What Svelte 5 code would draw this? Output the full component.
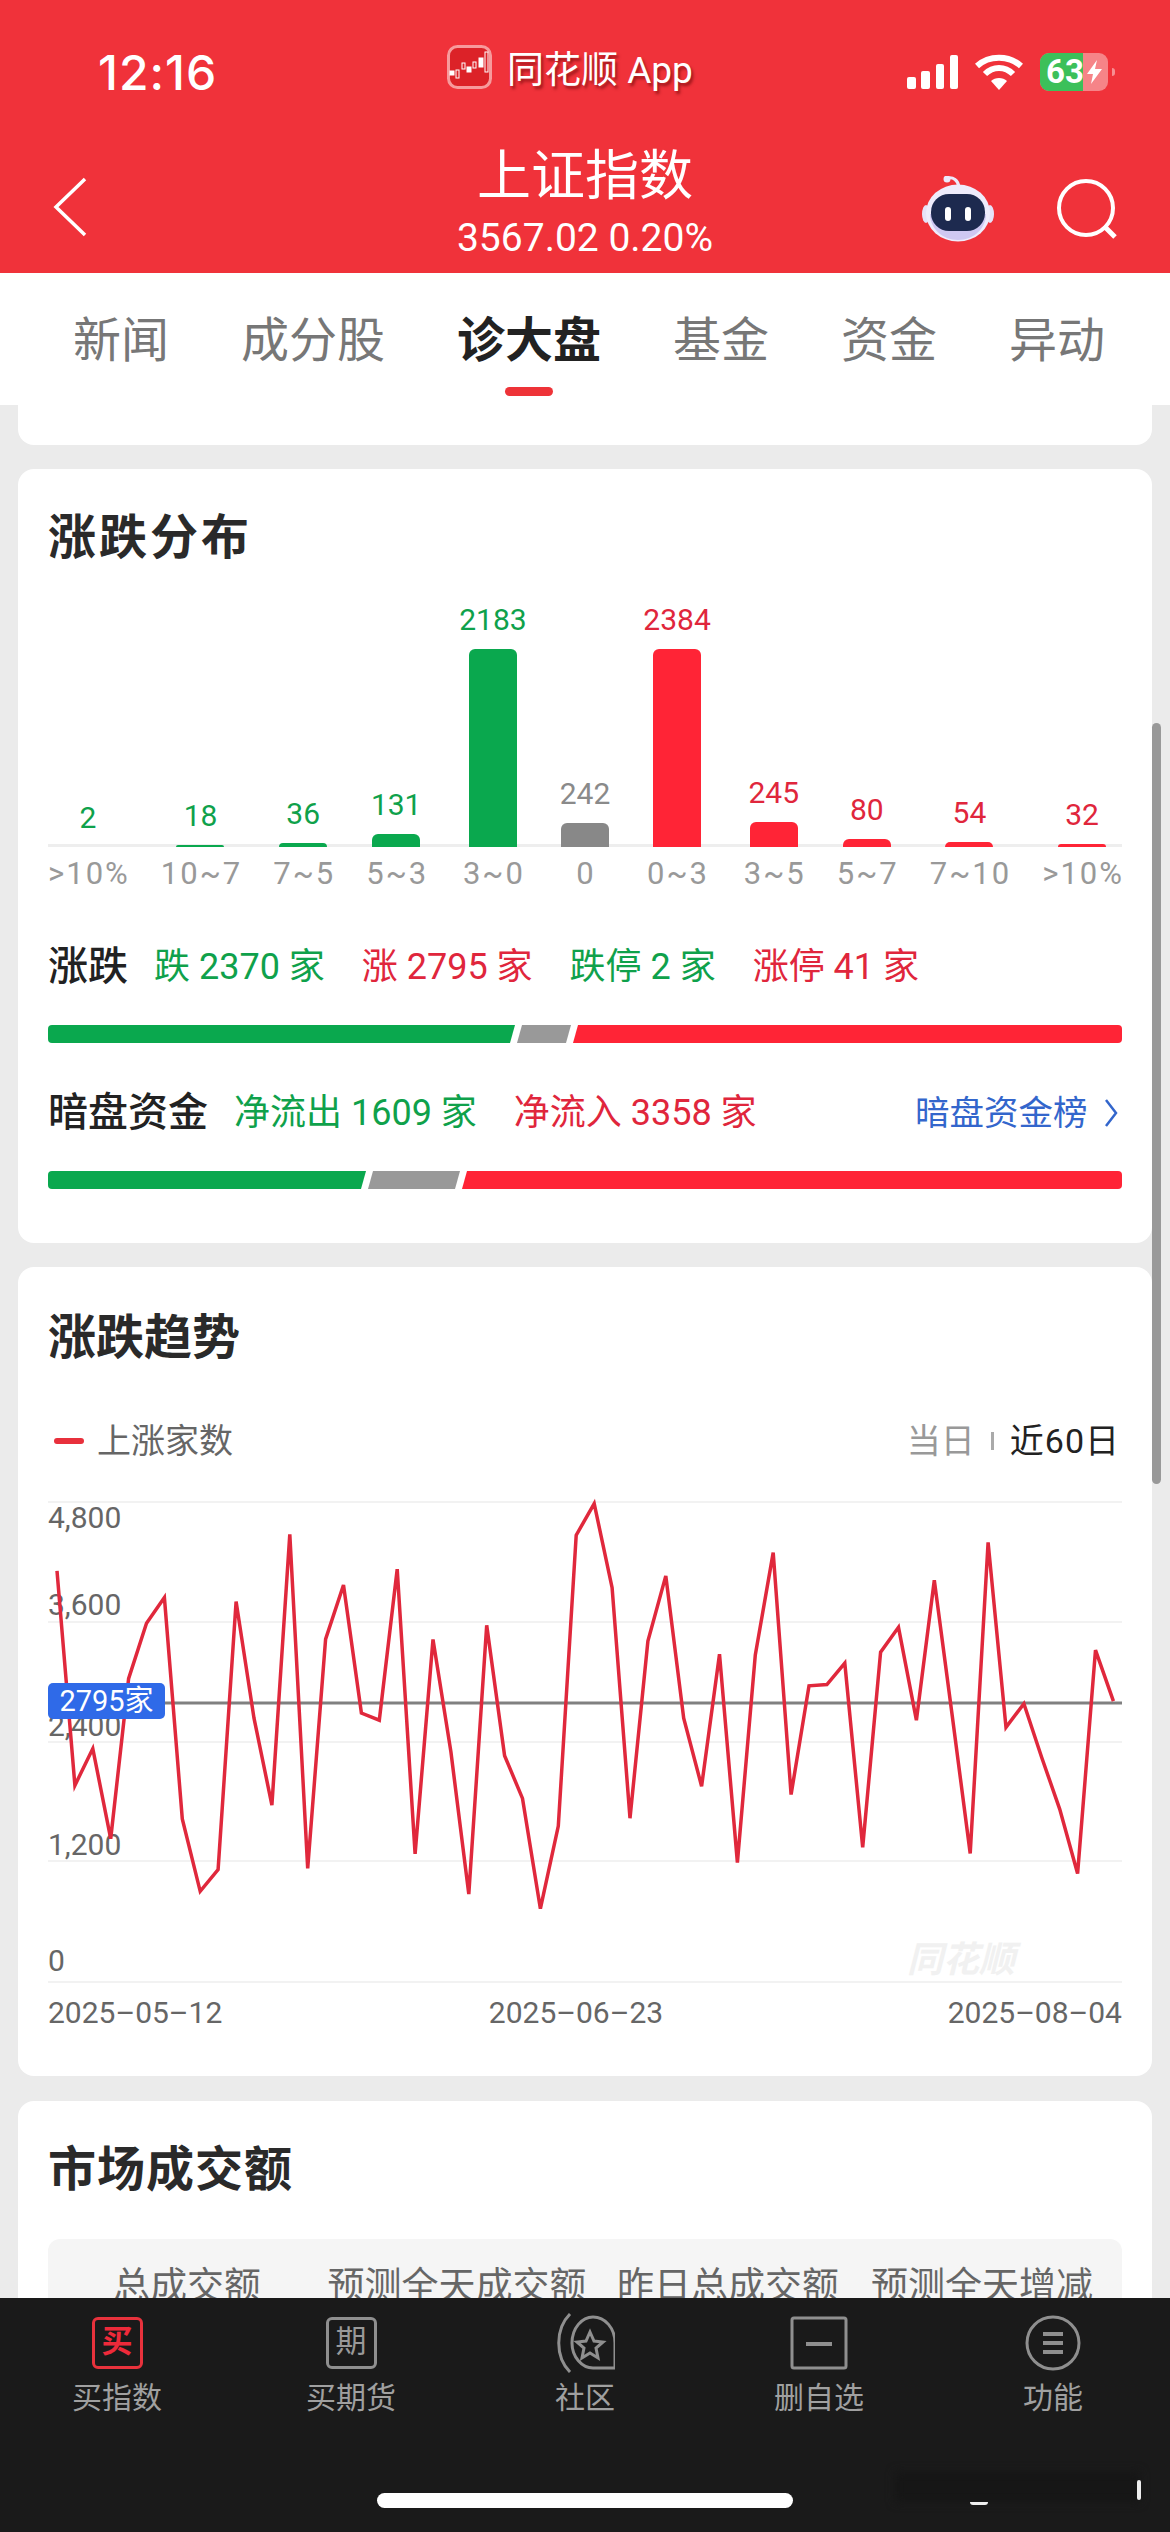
<script>
  const tabs = ['新闻', '成分股', '诊大盘', '基金', '资金', '异动'];
  const dist = [
    { v: '2', h: 0, l: '>10%', c: 'up' },
    { v: '18', h: 2, l: '10~7', c: 'up' },
    { v: '36', h: 4, l: '7~5', c: 'up' },
    { v: '131', h: 13, l: '5~3', c: 'up' },
    { v: '2183', h: 198, l: '3~0', c: 'up' },
    { v: '242', h: 24, l: '0', c: 'flat' },
    { v: '2384', h: 198, l: '0~3', c: 'down' },
    { v: '245', h: 25, l: '3~5', c: 'down' },
    { v: '80', h: 8, l: '5~7', c: 'down' },
    { v: '54', h: 5, l: '7~10', c: 'down' },
    { v: '32', h: 3, l: '>10%', c: 'down' }
  ];
  // y values read off the reference, 60 trading days
  const raw = [432,975,882,1110,705,565,500,1060,1243,1188,510,805,1025,340,1185,605,468,792,810,428,1148,606,890,1250,570,900,1008,1287,1078,342,262,475,1058,610,445,805,977,643,1170,645,386,998,723,720,666,1132,638,575,810,456,800,1147,360,828,768,905,1035,1198,633,762];
  const points = raw.map((v, i) => `${(9 + i * 17.905).toFixed(1)},${(v / 2.53 - 90).toFixed(1)}`).join(' ');
  const grid = [12, 132, 252, 371, 492];
  const yLabels = [
    { t: '4,800', y: 10 },
    { t: '3,600', y: 97 },
    { t: '2,400', y: 218 },
    { t: '1,200', y: 337 },
    { t: '0', y: 453 }
  ];
  const candles = [[3,26,4,4,1],[9,25,3,8,0],[15,18,3,6,0],[20,22,4,5,1],[26,17,3,6,0],[32,13,4,9,1],[38,7,3,20,0]];
</script>

<div class="page">
  <header class="head">
    <div class="status">
      <span class="time">12:16</span>
      <div class="source">
        <svg class="logo" width="45" height="44" viewBox="0 0 45 44">
          <rect x="1.5" y="1.5" width="42" height="41" rx="9" fill="#dc2228" stroke="#f79a9c" stroke-width="3"/>
          {#each candles as c}
            <rect x={c[0]} y={c[1]} width={c[2]} height={c[3]} fill={c[4] ? '#fff' : 'none'} stroke="#fff" stroke-width="1"/>
          {/each}
        </svg>
        <span>同花顺 App</span>
      </div>
      <div class="sys">
        <svg width="51" height="34" viewBox="0 0 51 34" fill="#fff">
          <rect x="0" y="22" width="9" height="12" rx="2"/>
          <rect x="14" y="16" width="9" height="18" rx="2"/>
          <rect x="29" y="9" width="8" height="25" rx="2"/>
          <rect x="43" y="0" width="8" height="34" rx="2"/>
        </svg>
        <svg width="48" height="36" viewBox="0 0 48 36" fill="none" stroke="#fff" stroke-width="6">
          <path d="M2 12 C14 1 34 1 46 12"/>
          <path d="M10 20 C18 12 30 12 38 20"/>
          <path d="M24 36 L16 27 C20 23 28 23 32 27 Z" fill="#fff" stroke="none"/>
        </svg>
        <div class="cell">
          <div class="battery">
            <span class="charge"></span>
            <b>63</b>
            <svg width="15" height="24" viewBox="0 0 15 24"><path d="M10 0 L0 14 H6 L4 24 L15 9 H8 Z" fill="#fff"/></svg>
          </div>
          <span class="nub"></span>
        </div>
      </div>
    </div>
    <div class="nav">
      <svg class="back" width="34" height="60" viewBox="0 0 34 60" fill="none" stroke="#fff" stroke-width="3.5"><path d="M32 2 L3 30 L32 58"/></svg>
      <div class="title">
        <div class="name">上证指数</div>
        <div class="quote">3567.02 0.20%</div>
      </div>
      <div class="tools">
        <svg width="72" height="66" viewBox="0 0 72 66">
          <path d="M37 11 C36 4 31 1 26 2" fill="none" stroke="#ece9fb" stroke-width="3"/>
          <circle cx="25" cy="3" r="3.5" fill="#ece9fb"/>
          <ellipse cx="4" cy="38" rx="4" ry="9" fill="#e6e2f8"/>
          <ellipse cx="68" cy="38" rx="4" ry="9" fill="#e6e2f8"/>
          <ellipse cx="36" cy="37" rx="32" ry="28.5" fill="#eeecfc"/>
          <path d="M8 38 C8 52 20 64 36 64 C52 64 64 52 64 38 Z" fill="#cfc8f2"/>
          <rect x="9" y="18" width="54" height="37" rx="18" fill="#1d2a4f"/>
          <rect x="23" y="31" width="6" height="14" rx="3" fill="#fff"/>
          <rect x="43" y="31" width="6" height="14" rx="3" fill="#fff"/>
        </svg>
        <svg width="62" height="60" viewBox="0 0 62 60" fill="none" stroke="#fff" stroke-width="4">
          <circle cx="30" cy="29" r="27"/>
          <path d="M48 47 L59 58" stroke-width="5"/>
        </svg>
      </div>
    </div>
  </header>

  <nav class="tabs">
    {#each tabs as t, i}
      <div class="tab" class:active={i === 2}>
        {t}
        {#if i === 2}<span class="mark"></span>{/if}
      </div>
    {/each}
  </nav>

  <main class="scroll">
    <div class="stub"></div>

    <section class="card one">
      <h2>涨跌分布</h2>
      <div class="dist">
        {#each dist as d}
          <div class="col {d.c}">
            <span class="val">{d.v}</span>
            <span class="bar" style="height: {d.h}px"></span>
            <span class="rng">{d.l}</span>
          </div>
        {/each}
      </div>

      <div class="row first">
        <strong>涨跌</strong>
        <span class="up">跌 2370 家</span>
        <span class="down">涨 2795 家</span>
        <span class="up">跌停 2 家</span>
        <span class="down">涨停 41 家</span>
      </div>
      <div class="split">
        <i class="g" style="width: 467px"></i>
        <i class="m" style="width: 54px"></i>
        <i class="r"></i>
      </div>

      <div class="row second">
        <strong>暗盘资金</strong>
        <span class="up">净流出 1609 家</span>
        <span class="down">净流入 3358 家</span>
        <span class="link">暗盘资金榜
          <svg width="14" height="30" viewBox="0 0 14 30" fill="none" stroke="#3366cc" stroke-width="2.5"><path d="M2 2 L12 15 L2 28"/></svg>
        </span>
      </div>
      <div class="split">
        <i class="g" style="width: 318px"></i>
        <i class="m" style="width: 92px"></i>
        <i class="r"></i>
      </div>
    </section>

    <section class="card two">
      <h2>涨跌趋势</h2>
      <div class="legend">
        <span class="key"><i></i>上涨家数</span>
        <span class="range"><span class="off">当日</span><i></i><span class="on">近60日</span></span>
      </div>
      <div class="plot">
        {#each yLabels as y}
          <span class="ylab" style="top: {y.y}px">{y.t}</span>
        {/each}
        <span class="mark-wm">同花顺</span>
        <svg width="1074" height="495" viewBox="0 0 1074 495">
          {#each grid as g}
            <line x1="0" x2="1074" y1={g} y2={g} stroke="#f2f2f2" stroke-width="2"/>
          {/each}
          <line x1="0" x2="1074" y1="213" y2="213" stroke="#808080" stroke-width="3"/>
          <polyline {points} fill="none" stroke="#e0283c" stroke-width="3.5"/>
        </svg>
        <span class="badge">2795家</span>
      </div>
      <div class="dates">
        <span>2025–05–12</span>
        <span class="mid">2025–06–23</span>
        <span>2025–08–04</span>
      </div>
    </section>

    <section class="card three">
      <h2>市场成交额</h2>
      <div class="panel">
        <span>总成交额</span>
        <span>预测全天成交额</span>
        <span>昨日总成交额</span>
        <span>预测全天增减</span>
      </div>
    </section>

    <span class="thumb"></span>
  </main>

  <footer class="bottom">
    <div class="item">
      <span class="boxed on">买</span>
      <span>买指数</span>
    </div>
    <div class="item">
      <span class="boxed">期</span>
      <span>买期货</span>
    </div>
    <div class="item">
      <svg width="60" height="60" viewBox="0 0 60 60" fill="none" stroke="#8f8f8f" stroke-width="3">
        <path d="M15 1 C0 16 0 44 15 59"/>
        <path d="M60 55 H38 C27 55 17 44 17 30 C17 15 27 4 38 4 C50 4 60 15 60 30 Z"/>
        <path d="M35 19 L39 28 L48 29 L41 35 L43 45 L35 40 L27 45 L29 35 L22 29 L31 28 Z"/>
      </svg>
      <span>社区</span>
    </div>
    <div class="item">
      <svg width="60" height="60" viewBox="0 0 60 60" fill="none" stroke="#8f8f8f" stroke-width="3">
        <rect x="3" y="5" width="54" height="50" rx="2"/>
        <path d="M17 31 H43" stroke-width="4"/>
      </svg>
      <span>删自选</span>
    </div>
    <div class="item">
      <svg width="60" height="60" viewBox="0 0 60 60" fill="none" stroke="#8f8f8f" stroke-width="3">
        <circle cx="30" cy="30" r="26"/>
        <path d="M20 21 H40 M20 30 H40 M20 39 H40" stroke-width="4"/>
      </svg>
      <span>功能</span>
    </div>
    <span class="smudge"></span>
    <span class="bit u"></span>
    <span class="bit j"></span>
    <span class="home"></span>
  </footer>
</div>

<style>
  :global(body) {
    margin: 0;
    background: #ebebeb;
  }
  .page {
    width: 1170px;
    height: 2532px;
    display: flex;
    flex-direction: column;
    overflow: hidden;
    font-family: Roboto, "Noto Sans CJK SC", sans-serif;
    color: #222;
  }

  .head {
    height: 273px;
    background: #f0323a;
    color: #fff;
    flex-shrink: 0;
  }
  .status {
    height: 144px;
    padding-left: 98px;
    display: grid;
    grid-template-columns: 349px 460px 1fr;
    align-items: center;
  }
  .time {
    font: 500 48px Inter, sans-serif;
    letter-spacing: 1px;
  }
  .source {
    display: flex;
    align-items: center;
    gap: 15px;
    margin-top: -10px;
    font-size: 37px;
    color: #fff;
    text-shadow: 2px 3px 3px rgba(90, 0, 0, .55);
  }
  .sys {
    display: flex;
    align-items: center;
    gap: 17px;
  }
  .cell {
    display: flex;
    align-items: center;
    gap: 4px;
  }
  .nub {
    width: 3px;
    height: 8px;
    border-radius: 0 4px 4px 0;
    background: rgba(255, 255, 255, .45);
  }
  .battery {
    width: 68px;
    height: 38px;
    border-radius: 9px;
    background: rgba(255, 255, 255, .4);
    position: relative;
    overflow: hidden;
    display: flex;
    align-items: center;
    padding-left: 6px;
    box-sizing: border-box;
  }
  .battery b {
    position: relative;
    font: 700 33px/38px Roboto, sans-serif;
  }
  .battery svg {
    position: relative;
    margin-left: 3px;
  }
  .charge {
    position: absolute;
    left: 0;
    top: 0;
    bottom: 0;
    width: 63%;
    background: #3cc05a;
  }
  .nav {
    height: 129px;
    display: grid;
    grid-template-columns: 1fr auto 1fr;
    align-items: center;
  }
  .back {
    margin-left: 53px;
    margin-top: -4px;
  }
  .title {
    text-align: center;
    padding-top: 3px;
  }
  .name {
    font-size: 54px;
    line-height: 60px;
  }
  .quote {
    font-size: 39px;
    line-height: 44px;
    margin-top: 9px;
    margin-bottom: 13px;
  }
  .tools {
    display: flex;
    justify-content: flex-end;
    align-items: center;
    gap: 62px;
    padding-right: 52px;
  }

  .tabs {
    height: 132px;
    box-sizing: border-box;
    padding: 44px 65px 0 73px;
    background: #fff;
    display: flex;
    justify-content: space-between;
    flex-shrink: 0;
  }
  .tab {
    display: flex;
    flex-direction: column;
    align-items: center;
    font-size: 48px;
    line-height: 48px;
    color: #777;
  }
  .tab.active {
    color: #222;
    font-weight: 700;
  }
  .mark {
    width: 48px;
    height: 9px;
    border-radius: 5px;
    margin-top: 22px;
    background: #ee3338;
  }

  .scroll {
    flex: 1;
    min-height: 0;
    overflow: hidden;
    position: relative;
    padding: 0 18px;
    background: #ebebeb;
    display: flex;
    flex-direction: column;
    gap: 24px;
  }
  .stub {
    height: 40px;
    flex-shrink: 0;
    background: #fff;
    border-radius: 0 0 16px 16px;
  }
  .card {
    background: #fff;
    border-radius: 16px;
    padding: 39px 30px 0;
    flex-shrink: 0;
  }
  .card.one {
    height: 774px;
    box-sizing: border-box;
  }
  .card.two {
    height: 809px;
    box-sizing: border-box;
    padding-top: 41px;
    margin-bottom: 1px;
  }
  h2 {
    margin: 0;
    font-size: 48px;
    line-height: 60px;
    font-weight: 700;
    color: #2a2a2a;
  }
  .one h2 {
    letter-spacing: 3px;
  }
  .three h2 {
    letter-spacing: 1px;
  }

  .dist {
    margin-top: 34px;
    display: flex;
    justify-content: space-between;
    align-items: flex-end;
    position: relative;
  }
  .dist::before {
    content: '';
    position: absolute;
    left: 0;
    right: 0;
    bottom: 54px;
    height: 3px;
    background: #eee;
  }
  .col {
    display: flex;
    flex-direction: column;
    align-items: center;
    position: relative;
  }
  .val {
    font-size: 30px;
    line-height: 36px;
    margin-bottom: 11px;
  }
  .bar {
    width: 48px;
    border-radius: 6px 6px 0 0;
  }
  .rng {
    font-size: 31px;
    line-height: 54px;
    letter-spacing: 2px;
    margin-right: -2px;
    color: #999;
    white-space: nowrap;
  }
  .col.up .val { color: #0fa14b; }
  .col.up .bar { background: #0aa84e; }
  .col.down .val { color: #e0263c; }
  .col.down .bar { background: #ff2436; }
  .col.flat .val { color: #8a8a8a; }
  .col.flat .bar { background: #888; }

  .row {
    display: flex;
    align-items: center;
    gap: 37px;
    font-size: 36px;
    line-height: 60px;
    white-space: pre;
  }
  .row.first { margin-top: 36px; }
  .row.second { margin-top: 40px; }
  .row strong {
    font-size: 40px;
    font-weight: 500;
    color: #222;
    margin-right: -11px;
  }
  .row .up { color: #0fa14b; }
  .row .down { color: #e0263c; }
  .link {
    margin-left: auto;
    margin-right: 4px;
    color: #3366cc;
    font-size: 34.5px;
    display: flex;
    align-items: center;
    gap: 8px;
  }
  .split {
    height: 18px;
    margin-top: 28px;
    display: flex;
    gap: 2px;
    border-radius: 4px;
    overflow: hidden;
  }
  .split i { display: block; }
  .split .g {
    background: #0aa84e;
    clip-path: polygon(0 0, 100% 0, calc(100% - 5px) 100%, 0 100%);
  }
  .split .m {
    background: #999;
    clip-path: polygon(5px 0, 100% 0, calc(100% - 5px) 100%, 0 100%);
  }
  .split .r {
    flex: 1;
    background: #ff2436;
    clip-path: polygon(5px 0, 100% 0, 100% 100%, 0 100%);
  }

  .legend {
    margin-top: 51px;
    display: flex;
    justify-content: space-between;
    align-items: center;
    font-size: 34px;
    line-height: 44px;
    color: #666;
  }
  .key {
    display: flex;
    align-items: center;
    gap: 13px;
    margin-left: 6px;
  }
  .key i {
    width: 30px;
    height: 6px;
    border-radius: 3px;
    background: #e8303c;
  }
  .range {
    display: flex;
    align-items: center;
    color: #222;
    margin-right: 2px;
  }
  .range .off { color: #999; }
  .range .on { letter-spacing: 1px; }
  .range i {
    width: 3px;
    height: 18px;
    margin: 0 16px;
    background: #aaa;
  }
  .plot {
    position: relative;
    height: 495px;
    margin-top: 27px;
  }
  .plot svg {
    position: absolute;
    left: 0;
    top: 0;
    display: block;
  }
  .ylab {
    position: absolute;
    left: 0;
    font-size: 30px;
    line-height: 36px;
    color: #666;
  }
  .mark-wm {
    position: absolute;
    left: 859px;
    top: 450px;
    font-size: 36px;
    line-height: 40px;
    font-weight: 700;
    font-style: italic;
    color: #f1f1f1;
  }
  .badge {
    position: absolute;
    left: 0;
    top: 193px;
    width: 117px;
    height: 36px;
    border-radius: 5px;
    background: #2f6ae8;
    color: #fff;
    font-size: 29px;
    line-height: 36px;
    text-align: center;
  }
  .dates {
    margin-top: 8px;
    display: flex;
    justify-content: space-between;
    font-size: 30px;
    line-height: 40px;
    color: #666;
  }
  .dates .mid {
    margin-right: 18px;
  }
  .panel {
    margin-top: 39px;
    padding: 24px 0 60px;
    background: #f5f5f5;
    border-radius: 12px;
    display: grid;
    grid-template-columns: 278px 262px 280px 228px;
    font-size: 37px;
    line-height: 48px;
    color: #666;
    text-align: center;
    white-space: nowrap;
  }
  .thumb {
    position: absolute;
    left: 1152px;
    top: 318px;
    width: 9px;
    height: 761px;
    border-radius: 5px;
    background: #999;
  }

  .bottom {
    height: 234px;
    flex-shrink: 0;
    box-sizing: border-box;
    background: #1a1a1a;
    padding-top: 15px;
    display: grid;
    grid-template-columns: repeat(5, 234px);
    align-items: start;
    position: relative;
  }
  .item {
    display: flex;
    flex-direction: column;
    align-items: center;
    gap: 3px;
    font-size: 30px;
    line-height: 44px;
    color: #a0a0a0;
  }
  .item svg {
    display: block;
  }
  .boxed {
    width: 51px;
    height: 52px;
    margin: 4px 0;
    box-sizing: border-box;
    border: 3px solid #8f8f8f;
    border-radius: 6px;
    font-size: 31px;
    line-height: 44px;
    text-align: center;
    color: #999;
  }
  .boxed.on {
    border-color: #e8323c;
    color: #ee2a3a;
    font-weight: 700;
  }
  .smudge {
    position: absolute;
    left: 895px;
    top: 174px;
    width: 245px;
    height: 30px;
    background: #161616;
    filter: blur(5px);
  }
  .bit {
    position: absolute;
    background: #eee;
  }
  .bit.u {
    left: 970px;
    top: 204px;
    width: 18px;
    height: 3px;
    border-radius: 0 0 9px 9px;
  }
  .bit.j {
    left: 1137px;
    top: 182px;
    width: 4px;
    height: 20px;
    border-radius: 2px;
  }
  .home {
    position: absolute;
    left: 377px;
    top: 195px;
    width: 416px;
    height: 15px;
    border-radius: 8px;
    background: #fff;
  }
</style>
